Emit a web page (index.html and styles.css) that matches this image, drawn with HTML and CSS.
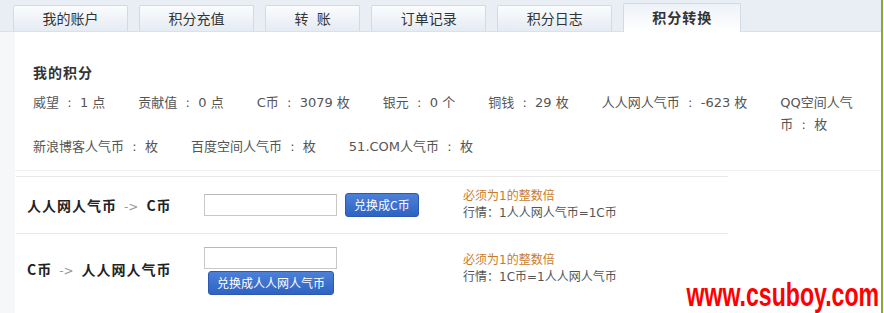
FILE: index.html
```html
<!DOCTYPE html>
<html lang="zh-CN">
<head>
    <meta charset="UTF-8">
    <meta name="viewport" content="width=device-width, initial-scale=1.0">
    <title>积分转换</title>
    <link rel="stylesheet" href="styles.css">
</head>
<body>
<div class="frame">
    <div class="tabs">
        <a class="tab" href="#">我的账户</a>
        <a class="tab" href="#">积分充值</a>
        <a class="tab" href="#">转 账</a>
        <a class="tab" href="#">订单记录</a>
        <a class="tab" href="#">积分日志</a>
        <a class="tab active" href="#">积分转换</a>
    </div>

    <div class="panel">
        <div class="summary">
            <h3 class="summary-title">我的积分</h3>
            <div class="stats">
                <span class="stat">威望  :  1 点</span>
                <span class="stat">贡献值  :  0 点</span>
                <span class="stat">C币  :  3079 枚</span>
                <span class="stat">银元  :  0 个</span>
                <span class="stat">铜钱  :  29 枚</span>
                <span class="stat">人人网人气币  :  -623 枚</span>
                <span class="stat stat-last">QQ空间人气<br>币  :  枚</span>
            </div>
            <div class="stats">
                <span class="stat">新浪博客人气币  :  枚</span>
                <span class="stat">百度空间人气币  :  枚</span>
                <span class="stat">51.COM人气币  :  枚</span>
            </div>
        </div>

        <div class="exchange">
            <div class="exchange-row">
                <div class="exchange-label">人人网人气币<span class="arrow">-&gt;</span>C币</div>
                <div class="exchange-form">
                    <input class="amount" type="text">
                    <button class="btn">兑换成C币</button>
                </div>
                <div class="exchange-note">
                    <p class="note-warn">必须为1的整数倍</p>
                    <p class="note-rate">行情：1人人网人气币=1C币</p>
                </div>
            </div>
            <div class="exchange-row exchange-row-tall">
                <div class="exchange-label">C币<span class="arrow">-&gt;</span>人人网人气币</div>
                <div class="exchange-form stacked">
                    <input class="amount" type="text">
                    <button class="btn">兑换成人人网人气币</button>
                </div>
                <div class="exchange-note">
                    <p class="note-warn">必须为1的整数倍</p>
                    <p class="note-rate">行情：1C币=1人人网人气币</p>
                </div>
            </div>
        </div>

        <div class="watermark">www.csuboy.com</div>
    </div>
</div>
</body>
</html>
```

FILE: styles.css
```css
/* CSS styles */
body {
    margin: 0;
    background-color: #f4f4f4;
    font-family: "DejaVu Sans", "Noto Sans CJK SC", sans-serif;
    font-size: 13px;
    color: #555;
}
.frame {
    width: 881px;
    min-height: 100vh;
    border-right: 2px solid #8da63c;
    background-color: #fff;
    display: flex;
    flex-direction: column;
}
.tabs {
    height: 31px;
    display: flex;
    align-items: flex-end;
    gap: 11px;
    padding-left: 13px;
    background-color: #e9eef5;
    border-bottom: 1px solid #d9e1eb;
}
.tab {
    height: 25px;
    line-height: 25px;
    padding: 0 28.5px;
    border: 1px solid #d2dae4;
    border-bottom: none;
    border-radius: 2px 2px 0 0;
    background: linear-gradient(#fafcfe, #e5ebf3);
    color: #333;
    font-family: "Noto Sans CJK SC", sans-serif;
    font-size: 14px;
    word-spacing: 5px;
    text-decoration: none;
}
.tab.active {
    height: 27px;
    line-height: 27px;
    margin-bottom: -1px;
    padding: 0 28px 1px;
    background: linear-gradient(#edf2f8, #fff);
    font-weight: bold;
    letter-spacing: 1px;
}
.panel {
    flex: 1;
    position: relative;
    border-left: 15px solid #f6f7f9;
}
.summary {
    padding: 29px 6px 12px 18px;
    border-bottom: 1px solid #f0f0f0;
}
.summary-title {
    margin: 0 0 9px;
    line-height: 22px;
    font-family: "Noto Sans CJK SC", sans-serif;
    font-size: 14px;
    letter-spacing: 1px;
    color: #333;
}
.stats {
    display: flex;
    align-items: flex-start;
    gap: 33px;
    line-height: 22px;
    white-space: pre-wrap;
}
.stat {
    flex: none;
}
.stat-last {
    flex: 0 1 auto;
    min-width: 0;
}
.exchange {
    width: 712px;
    margin: 5px 0 0 1px;
}
.exchange-row {
    display: grid;
    grid-template-columns: 188px 259px 1fr;
    align-items: center;
    height: 56px;
    border-top: 1px solid #e8e8e8;
}
.exchange-row-tall {
    height: 69px;
}
.exchange-label {
    padding-left: 11px;
    font-family: "Noto Sans CJK SC", sans-serif;
    font-size: 14px;
    font-weight: bold;
    letter-spacing: 1px;
    color: #222;
}
.arrow {
    margin: 0 8px 0 7px;
    font-family: "DejaVu Sans", sans-serif;
    font-size: 12px;
    font-weight: normal;
    color: #999;
    letter-spacing: 0;
}
.exchange-form {
    display: flex;
    align-items: center;
    gap: 8px;
}
.exchange-form.stacked {
    flex-direction: column;
    align-items: flex-start;
    gap: 2px;
    padding-top: 4px;
}
.amount {
    width: 133px;
    height: 22px;
    box-sizing: border-box;
    margin: 0;
    border: 1px solid #c8c8c8;
    border-top-color: #b8b8b8;
}
.btn {
    height: 24px;
    padding: 0 8px;
    border: 1px solid #2b58b0;
    border-radius: 3px;
    background: linear-gradient(#4c80d8, #2f63c3);
    color: #fff;
    font-family: "Noto Sans CJK SC", sans-serif;
    font-size: 12px;
    line-height: 22px;
    cursor: pointer;
}
.stacked .btn {
    margin-left: 4px;
}
.exchange-note {
    font-size: 12px;
    line-height: 17px;
}
.exchange-note p {
    margin: 0;
}
.note-warn {
    color: #c97b26;
}
.note-rate {
    color: #555;
}
.watermark {
    position: absolute;
    right: 2px;
    bottom: 3px;
    color: #f00;
    font-family: "Liberation Sans", sans-serif;
    font-size: 33px;
    font-weight: bold;
    line-height: 30px;
    transform: scaleX(0.7);
    transform-origin: right bottom;
}
```
